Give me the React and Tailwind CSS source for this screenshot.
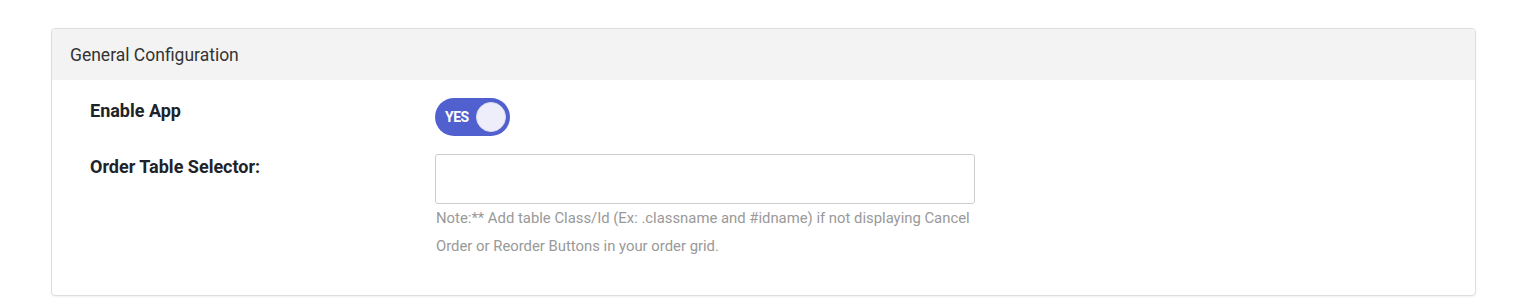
export default function App() {
    return (
        <div className="min-h-[300px] bg-white pt-[28px] px-[51px]" style={{ fontFamily: 'Roboto, "Liberation Sans", sans-serif' }}>
            <div className="w-[1425px] rounded-[4px] border border-[#dddddd] shadow-[0_1px_2px_rgba(0,0,0,0.06)] overflow-hidden">
                <div className="h-[51px] bg-[#f3f3f3] px-[18px] pt-[1px] flex items-center">
                    <h3 className="text-[17.5px] text-[#333333]">General Configuration</h3>
                </div>
                <div className="pt-[18px] pb-[35px] pl-[38px]">
                    <div className="flex">
                        <label className="w-[345px] pt-[1px] text-[18px] font-bold text-[#1e2329] leading-[24px]">Enable App</label>
                        <div className="w-[75px] h-[38px] rounded-full bg-[#5061cf] flex items-center justify-between pl-[10px] pr-[4px]">
                            <span className="text-[14px] font-bold text-white tracking-[-0.5px]">YES</span>
                            <span className="w-[30px] h-[30px] rounded-full bg-[#eeeefa] border border-[#dcdcf0]"></span>
                        </div>
                    </div>
                    <div className="flex mt-[18px]">
                        <label className="w-[345px] pt-[1px] text-[18px] font-bold text-[#1e2329] leading-[24px]">Order Table Selector:</label>
                        <div>
                            <input type="text" className="block w-[540px] h-[50px] border border-[#cccccc] rounded-[3px] px-3 outline-none" />
                            <p className="w-[548px] pl-[1px] text-[14.85px] leading-[28px] text-[#999999]">
                                Note:** Add table Class/Id (Ex: .classname and #idname) if not displaying Cancel Order or Reorder Buttons in your order grid.
                            </p>
                        </div>
                    </div>
                </div>
            </div>
        </div>
    );
}
